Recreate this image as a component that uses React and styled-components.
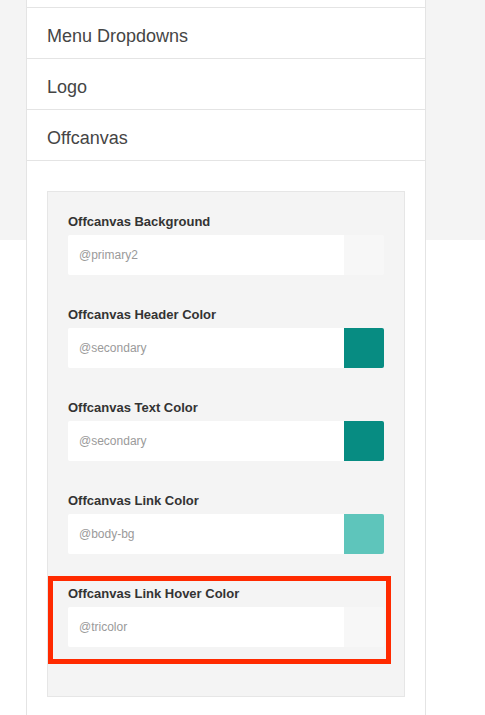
import React from "react";
import styled, { createGlobalStyle } from "styled-components";

const GlobalStyle = createGlobalStyle`
    html, body {
        margin: 0;
        padding: 0;
    }
    body {
        height: 715px;
        overflow: hidden;
        font-family: "Liberation Sans", Arial, Helvetica, sans-serif;
        background: linear-gradient(to bottom, #f4f4f4 0, #f4f4f4 240px, #ffffff 240px);
    }
`

const Panel = styled.div`
    margin-left: 26px;
    width: 398px;
    min-height: 715px;
    background: #fff;
    border-left: 1px solid #e4e4e4;
    border-right: 1px solid #e4e4e4;
`

const Stub = styled.div`
    height: 7px;
    border-bottom: 1px solid #e4e4e4;
`

const MenuItem = styled.div`
    height: 44px;
    padding: 6px 0 0 20px;
    line-height: 44px;
    font-size: 18px;
    color: #454545;
    border-bottom: 1px solid #e4e4e4;
`

const Content = styled.div`
    padding: 30px 20px 0 20px;
`

const SettingsBox = styled.div`
    background: #f4f4f4;
    border: 1px solid #e6e6e6;
    padding: 21px 20px 18px 20px;
`

const Group = styled.div`
    position: relative;
    margin-bottom: 31px;
`

const Highlight = styled.div`
    position: absolute;
    top: -9px;
    left: -20px;
    right: -7px;
    bottom: -17px;
    border: 5px solid #ff2a00;
    pointer-events: none;
`

const Label = styled.div`
    font-size: 13px;
    font-weight: bold;
    line-height: 18px;
    color: #333;
    margin-bottom: 4px;
`

const InputRow = styled.div`
    display: flex;
    height: 40px;
    border-radius: 2px;
    overflow: hidden;
`

const Input = styled.div`
    flex: 1;
    background: #fff;
    padding-left: 11px;
    line-height: 40px;
    font-size: 12px;
    color: #9a9a9a;
`

const Swatch = styled.div`
    width: 40px;
    background: ${props => props.color};
`

const fields = [
    { label: "Offcanvas Background", value: "@primary2", color: "#f7f7f7" },
    { label: "Offcanvas Header Color", value: "@secondary", color: "#078c82" },
    { label: "Offcanvas Text Color", value: "@secondary", color: "#078c82" },
    { label: "Offcanvas Link Color", value: "@body-bg", color: "#5ec5bb" },
    { label: "Offcanvas Link Hover Color", value: "@tricolor", color: "#f7f7f7", marked: true },
];

const App = () => {
    return (
        <>
            <GlobalStyle />
            <Panel>
                <Stub />
                <MenuItem>Menu Dropdowns</MenuItem>
                <MenuItem>Logo</MenuItem>
                <MenuItem>Offcanvas</MenuItem>
                <Content>
                    <SettingsBox>
                        {fields.map(f => (
                            <Group key={f.label}>
                                {f.marked && <Highlight />}
                                <Label>{f.label}</Label>
                                <InputRow>
                                    <Input>{f.value}</Input>
                                    <Swatch color={f.color} />
                                </InputRow>
                            </Group>
                        ))}
                    </SettingsBox>
                </Content>
            </Panel>
        </>
    );
}

export default App;
